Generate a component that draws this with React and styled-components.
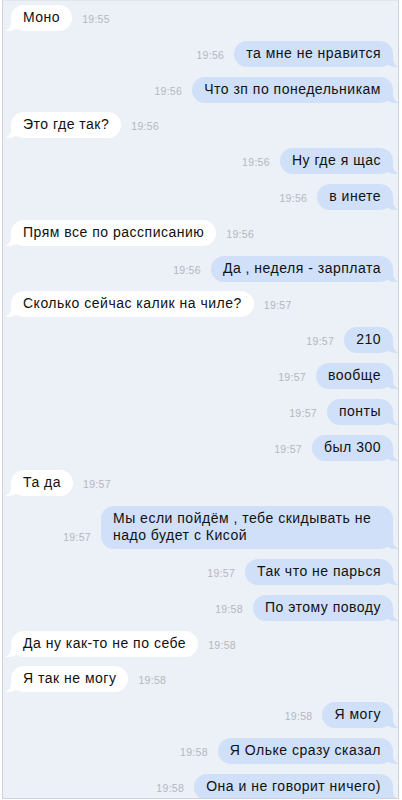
import React from 'react'
import styled, { createGlobalStyle } from 'styled-components'

const GlobalStyle = createGlobalStyle`
  html, body {
    margin: 0;
    padding: 0;
    background: #ffffff;
  }
  body {
    font-family: "Liberation Sans", Arial, sans-serif;
  }
`;

const PAGE_BG = '#ecf0f7';
const OUT_BG = '#cfe0f8';
const IN_BG = '#ffffff';

const Frame = styled.div`
  box-sizing: border-box;
  margin-left: 2px;
  width: 397px;
  height: 799px;
  overflow: hidden;
  background: ${PAGE_BG};
  border: 1px solid #cfd3d9;
  border-top-color: #e2e5ea;
  padding: 4px 5px 0 8px;
  display: flex;
  flex-direction: column;
  gap: 9.8px;
`;

const Row = styled.div`
  display: flex;
  align-items: flex-end;
  justify-content: ${p => (p.$out ? 'flex-end' : 'flex-start')};
  gap: 10px;
`;

const Bubble = styled.div`
  position: relative;
  z-index: 0;
  max-width: 268px;
  padding: 4px 12px 5px 12px;
  border-radius: 13px;
  background: ${p => (p.$out ? OUT_BG : IN_BG)};
  color: #111;
  font-size: 14px;
  line-height: 17px;
  letter-spacing: 0.5px;

  /* little curled tail at the bottom corner */
  &::before {
    content: "";
    position: absolute;
    z-index: -1;
    bottom: 0;
    ${p => (p.$out ? 'right: -5px;' : 'left: -5px;')}
    width: 16px;
    height: 14px;
    background: ${p => (p.$out ? OUT_BG : IN_BG)};
    ${p => (p.$out
      ? 'border-bottom-left-radius: 14px 12px;'
      : 'border-bottom-right-radius: 14px 12px;')}
  }
  &::after {
    content: "";
    position: absolute;
    z-index: -1;
    bottom: 0;
    ${p => (p.$out ? 'right: -14px;' : 'left: -14px;')}
    width: 14px;
    height: 14px;
    background: ${PAGE_BG};
    ${p => (p.$out
      ? 'border-bottom-left-radius: 8px;'
      : 'border-bottom-right-radius: 8px;')}
  }
`;

const Time = styled.span`
  font-size: 10.5px;
  line-height: 12px;
  letter-spacing: 0.3px;
  color: #b3b8c0;
  margin-bottom: 6px;
  white-space: nowrap;
`;

const messages = [
  { out: false, text: 'Моно', time: '19:55' },
  { out: true, text: 'та мне не нравится', time: '19:56' },
  { out: true, text: 'Что зп по понедельникам', time: '19:56' },
  { out: false, text: 'Это где так?', time: '19:56' },
  { out: true, text: 'Ну где я щас', time: '19:56' },
  { out: true, text: 'в инете', time: '19:56' },
  { out: false, text: 'Прям все по рассписанию', time: '19:56' },
  { out: true, text: 'Да , неделя - зарплата', time: '19:56' },
  { out: false, text: 'Сколько сейчас калик на чиле?', time: '19:57' },
  { out: true, text: '210', time: '19:57' },
  { out: true, text: 'вообще', time: '19:57' },
  { out: true, text: 'понты', time: '19:57' },
  { out: true, text: 'был 300', time: '19:57' },
  { out: false, text: 'Та да', time: '19:57' },
  { out: true, text: 'Мы если пойдём , тебе скидывать не надо будет с Кисой', time: '19:57' },
  { out: true, text: 'Так что не парься', time: '19:57' },
  { out: true, text: 'По этому поводу', time: '19:58' },
  { out: false, text: 'Да ну как-то не по себе', time: '19:58' },
  { out: false, text: 'Я так не могу', time: '19:58' },
  { out: true, text: 'Я могу', time: '19:58' },
  { out: true, text: 'Я Ольке сразу сказал', time: '19:58' },
  { out: true, text: 'Она и не говорит ничего)', time: '19:58' },
];

function Message({ out, text, time }) {
  return (
    <Row $out={out}>
      {out && <Time>{time}</Time>}
      <Bubble $out={out}>{text}</Bubble>
      {!out && <Time>{time}</Time>}
    </Row>
  )
}

export default function App() {
  return (
    <>
      <GlobalStyle />
      <Frame>
        {messages.map((m, i) => (
          <Message key={i} {...m} />
        ))}
      </Frame>
    </>
  )
}
